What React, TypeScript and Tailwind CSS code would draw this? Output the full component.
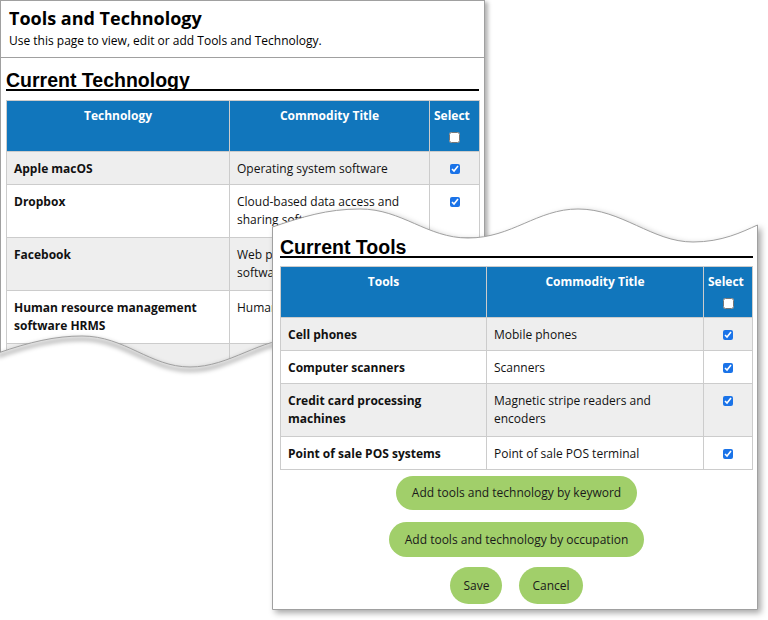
import React from "react";

type Row = { name: string; title: string; two?: boolean };

const technology: Row[] = [
  { name: "Apple macOS", title: "Operating system software" },
  { name: "Dropbox", title: "Cloud-based data access and sharing software", two: true },
  { name: "Facebook", title: "Web platform development software", two: true },
  { name: "Human resource management software HRMS", title: "Human resources software", two: true },
  { name: "Microsoft Excel", title: "Spreadsheet software" },
];

const tools: Row[] = [
  { name: "Cell phones", title: "Mobile phones" },
  { name: "Computer scanners", title: "Scanners" },
  { name: "Credit card processing machines", title: "Magnetic stripe readers and encoders", two: true },
  { name: "Point of sale POS systems", title: "Point of sale POS terminal" },
];

function Check({ checked }: { checked?: boolean }) {
  return (
    <div className="flex h-[18px] items-center justify-center">
      {checked ? (
        <input
          type="checkbox"
          defaultChecked
          className="m-0 h-[10px] w-[10px] accent-[#1a73e8]"
        />
      ) : (
        <input type="checkbox" className="m-0 h-[11px] w-[11px]" />
      )}
    </div>
  );
}

function DataTable({
  first,
  rows,
  widths,
}: {
  first: string;
  rows: Row[];
  widths: [string, string, string];
}) {
  return (
    <table className="w-full table-fixed border-collapse text-[12px] leading-[18px]">
      <colgroup>
        <col className={widths[0]} />
        <col className={widths[1]} />
        <col className={widths[2]} />
      </colgroup>
      <thead>
        <tr className="h-[51px] bg-[#1176bc] text-white">
          <th className="border border-[#cccccc] px-1 pt-[5px] align-top font-bold leading-[19px]">{first}</th>
          <th className="border border-[#cccccc] px-1 pt-[5px] align-top font-bold leading-[19px]">Commodity Title</th>
          <th className="border border-[#cccccc] px-0 pt-[5px] align-top font-bold leading-[19px]">
            <div className="pl-[4px] text-left">Select</div>
            <div className="mt-[3px]">
              <Check />
            </div>
          </th>
        </tr>
      </thead>
      <tbody>
        {rows.map((r, i) => {
          const pad = r.two ? "pt-[8px] pb-[8px]" : "pt-[8px] pb-[6px]";
          return (
            <tr key={r.name} className={i % 2 === 0 ? "bg-[#eeeeee]" : "bg-white"}>
              <td className={`border border-[#cccccc] px-[7px] ${pad} align-top font-bold text-[#111]`}>{r.name}</td>
              <td className={`border border-[#cccccc] px-[7px] ${pad} align-top text-[#111]`}>{r.title}</td>
              <td className={`border border-[#cccccc] ${pad} align-top`}>
                <Check checked />
              </td>
            </tr>
          );
        })}
      </tbody>
    </table>
  );
}

function Heading({ children }: { children: React.ReactNode }) {
  // descenders run into the black rule, as on the original page
  return (
    <div className="h-[20px] border-b-2 border-black">
      <div className="h-[18px] font-['Liberation_Sans',Arial,sans-serif] text-[19.5px] font-bold leading-[18px] text-black">
        {children}
      </div>
    </div>
  );
}

function PillButton({ children, h }: { children: React.ReactNode; h: "sm" | "md" | "lg" }) {
  const size =
    h === "lg" ? "h-[37px] px-[13px]" : h === "md" ? "h-[35px] px-[16px]" : "h-[34px] px-[16px]";
  return (
    <button className={`${size} rounded-full bg-[#a1cf6a] text-[12px] text-[#1a1a1a]`}>
      {children}
    </button>
  );
}

export default function App() {
  return (
    <div className="relative h-[620px] w-[768px] overflow-hidden bg-white font-['Open_Sans','Noto_Sans',sans-serif] text-black">
      {/* back sheet */}
      <div className="absolute left-0 top-0 w-[485px]">
        <div className="h-[372px] overflow-hidden border border-[#a0a0a0] bg-white shadow-[3px_2px_4px_rgba(0,0,0,0.3)]">
          <div className="border-b border-[#a0a0a0] px-[8px] pb-[7px] pt-[5px]">
            <div className="text-[18px] font-bold leading-[25px]">Tools and Technology</div>
            <div className="mt-[1px] text-[12px] leading-[18px]">Use this page to view, edit or add Tools and Technology.</div>
          </div>
          <div className="px-[5px] pt-[13px]">
            <Heading>Current Technology</Heading>
            <div className="mt-[9px]">
              <DataTable first="Technology" rows={technology} widths={["w-[223px]", "w-[200px]", "w-[50px]"]} />
            </div>
          </div>
        </div>
        <svg className="absolute left-0 top-[320px]" width="500" height="64" viewBox="0 0 500 64">
          <defs>
            <filter id="waveShadow" x="-10%" y="-50%" width="120%" height="200%">
              <feGaussianBlur stdDeviation="2" />
            </filter>
          </defs>
          <path
            d="M-2,33 C30,22 55,16 82,16 C125,16 150,47 190,47 C230,47 260,18 300,18 C340,18 370,47 410,47 C450,47 480,22 500,20 L500,64 L-2,64 Z"
            fill="white"
          />
          <path
            d="M-2,36 C30,25 55,19 82,19 C125,19 150,50 190,50 C230,50 260,21 300,21 C340,21 370,50 410,50 C450,50 480,25 500,23"
            fill="none"
            stroke="rgba(0,0,0,0.28)"
            strokeWidth="4"
            filter="url(#waveShadow)"
          />
          <path
            d="M-2,33 C30,22 55,16 82,16 C125,16 150,47 190,47 C230,47 260,18 300,18 C340,18 370,47 410,47 C450,47 480,22 500,20"
            fill="none"
            stroke="#a0a0a0"
            strokeWidth="1"
          />
        </svg>
      </div>

      {/* front sheet */}
      <div className="absolute left-[272px] top-[200px] h-[410px] w-[486px]">
        <svg
          className="absolute left-0 top-0 overflow-visible drop-shadow-[3px_3px_3px_rgba(0,0,0,0.35)]"
          width="486"
          height="410"
          viewBox="0 0 486 410"
        >
          <path
            d="M0.5,27 C30,17 55,9 88,9 C130,9 155,38 196,38 C240,38 265,9 306,9 C350,9 380,42 421,42 C450,42 470,32 485.5,25 L485.5,409.5 L0.5,409.5 Z"
            fill="white"
            stroke="#a0a0a0"
            strokeWidth="1"
          />
        </svg>
        <div className="relative flex flex-col pl-[8px] pr-[5px] pt-[38px]">
          <Heading>Current Tools</Heading>
          <div className="mt-[8px]">
            <DataTable first="Tools" rows={tools} widths={["w-[206px]", "w-[217px]", "w-[49px]"]} />
          </div>
          <div className="mt-[6px] flex flex-col items-center">
            <PillButton h="sm">Add tools and technology by keyword</PillButton>
            <div className="mt-[12px]">
              <PillButton h="md">Add tools and technology by occupation</PillButton>
            </div>
            <div className="mt-[10px] flex gap-[17px]">
              <PillButton h="lg">Save</PillButton>
              <PillButton h="lg">Cancel</PillButton>
            </div>
          </div>
        </div>
      </div>
    </div>
  );
}
